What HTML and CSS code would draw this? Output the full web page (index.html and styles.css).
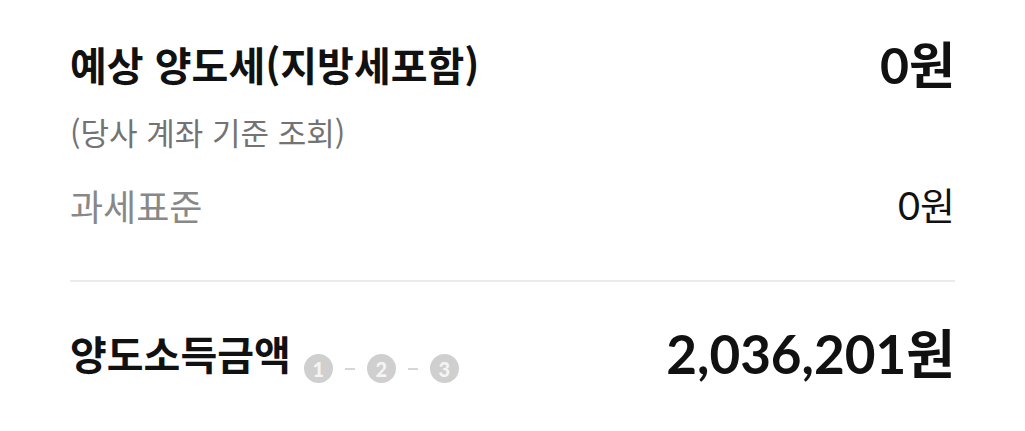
FILE: index.html
```html
<!DOCTYPE html>
<html lang="ko">
<head>
<meta charset="utf-8">
<link rel="stylesheet" href="styles.css">
</head>
<body>
<div class="page">
  <section class="top">
    <div class="row head">
      <div class="title">예상 양도세(지방세포함)</div>
      <div class="amount big"><span class="num">0</span>원</div>
    </div>
    <div class="sub">(당사 계좌 기준 조회)</div>
    <div class="row std">
      <div class="label">과세표준</div>
      <div class="amount reg"><span class="num">0</span>원</div>
    </div>
  </section>
  <div class="divider"></div>
  <div class="row gain">
    <div class="gain-left">
      <div class="title">양도소득금액</div>
      <div class="steps">
        <span class="step">1</span><span class="dash"></span><span class="step">2</span><span class="dash"></span><span class="step">3</span>
      </div>
    </div>
    <div class="amount huge"><span class="num">2,036,201</span>원</div>
  </div>
</div>
</body>
</html>
```
FILE: styles.css
```css
html, body {
  margin: 0;
  padding: 0;
  background: #fff;
}
body {
  font-family: "Noto Sans CJK KR", "Noto Sans", sans-serif;
  color: #111;
}
.page {
  padding: 0 70px 0 70px;
}
.top {
  padding-top: 35px;
}
.row {
  display: flex;
  justify-content: space-between;
  align-items: center;
}
.title {
  font-size: 40px;
  font-weight: 700;
  letter-spacing: 0;
  line-height: 54px;
}
.num {
  font-family: Lato, "Noto Sans", sans-serif;
}
.amount {
  line-height: 54px;
}
.big {
  font-size: 50px;
  font-weight: 700;
}
.sub {
  margin-top: 20px;
  font-size: 31px;
  color: #737373;
  line-height: 40px;
}
.std {
  margin-top: 30px;
}
.label {
  font-size: 36px;
  color: #888;
  line-height: 44px;
}
.reg {
  font-size: 38px;
  color: #111;
  line-height: 44px;
}
.divider {
  margin-top: 53px;
  height: 2px;
  background: #ebebeb;
}
.gain {
  margin-top: 40px;
}
.gain-left {
  display: flex;
  align-items: center;
}
.steps {
  display: flex;
  align-items: center;
  margin-left: 13px;
  margin-top: 32px;
}
.step {
  width: 29px;
  height: 29px;
  border-radius: 50%;
  background: #cfcfcf;
  color: #f4f4f4;
  font-family: Lato, sans-serif;
  font-weight: 900;
  font-size: 20px;
  line-height: 1;
  display: flex;
  align-items: center;
  justify-content: center;
}
.dash {
  width: 10px;
  height: 2px;
  background: #d6d6d6;
  margin: 0 12px;
}
.huge {
  font-size: 53px;
  font-weight: 700;
}
```
